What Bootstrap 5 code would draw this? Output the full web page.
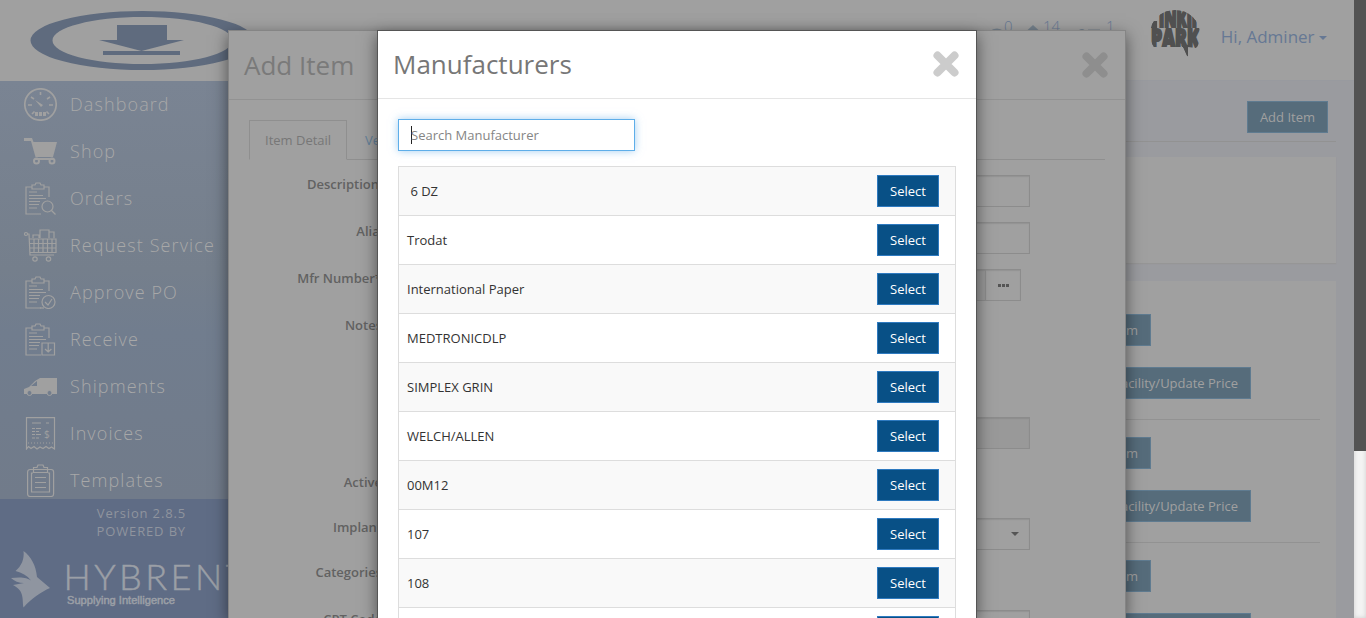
<!DOCTYPE html>
<html lang="en">
<head>
<meta charset="utf-8">
<title>Hybrent - Manufacturers</title>
<link href="https://cdn.jsdelivr.net/npm/bootstrap@5.3.0/dist/css/bootstrap.min.css" rel="stylesheet">
<style>
html,body{height:618px;overflow:hidden}
body{font-family:"Open Sans",sans-serif;font-size:13px;line-height:18px;background:#9a9b9f;color:#555}
.frame{height:618px;overflow:hidden}
.side{width:228px;height:618px;position:relative;z-index:1}
.brand{height:81px;background:#a0a0a0}
.menu{height:418px;background:linear-gradient(#7a8493,#757f8c 45%,#717d8e 60%,#717b8a)}
.menu a{height:47px;padding-left:24px;color:#a8a8a8;font-size:18px;letter-spacing:1.1px;font-weight:300;text-decoration:none;white-space:nowrap}
.menu a span{margin-top:-2px}
.menu svg{width:33px;height:33px;margin-right:13px;flex:none}
.ln{fill:none;stroke:#a0a0a0;stroke-width:1.2}
.foot{height:119px;background:#5f6c85;color:#8f949e;letter-spacing:.85px;padding:5px 42px 0 0}
.topbar{height:81px;background:#a0a0a0;border-bottom:1px solid #989a9f;padding-right:27px;color:#667894}
.hi{font-size:17px;margin:-7px 0 0 21px}
.caret{display:inline-block;border:4px solid transparent;border-top-color:currentColor;border-bottom:0}
.notif{margin-right:37px;margin-top:-1px}
.pagearea{width:1126px;height:618px;overflow:hidden}
.btn-x{--bs-btn-border-radius:0;--bs-btn-font-size:13px;--bs-btn-line-height:18px;--bs-btn-padding-y:6px;--bs-btn-padding-x:12px;height:32px;white-space:nowrap}
.btn-dim{--bs-btn-color:#a0a0a0;--bs-btn-bg:#566c7b;--bs-btn-border-color:#5f7b90;font-weight:500}
.btn-sel{--bs-btn-color:#fff;--bs-btn-bg:#085086;--bs-btn-border-color:#2e7ac0;width:62px;padding-left:0;padding-right:0;font-weight:500}
.content-in{padding:20px 18px 0 16px}
.rule{border-bottom:1px solid #929292}
.panel{background:#a0a0a0}
.panel-a{height:106px;margin:15px 0 18px;box-shadow:0 1px 1px #969696}
.panel-b{height:400px;padding:33px 16px}
.item{height:123px;padding-left:810px}
.item .rule{height:21px;margin-left:-810px}
.w-item{width:81px;text-align:right}.w-fac{width:181px;text-align:right;margin-top:21px}
.scrolltrack{width:12px;height:618px;background:#f3f3f3;box-shadow:inset 0 0 4px #ccc}
.scrollshade{height:451px;background:#535353}
.dlg{position:absolute;top:30px;height:588px;overflow:hidden;z-index:2;box-shadow:0 5px 15px rgba(0,0,0,.5)}
.dlg-item{left:228px;width:898px;background:#a0a0a0;border:1px solid #858585;border-bottom:0}
.dlg-mfr{left:377px;width:600px;background:#fff;border:1px solid #555;border-bottom:0;color:#333}
.dlg-head{height:68px;border-bottom:1px solid #e5e5e5;padding:0 16px 2px 15px;font-size:26px;color:#777}
.dlg-item .dlg-head{height:69px;border-color:#929292;color:#7a7a7a;padding-bottom:0}
.tabs{margin:20px 20px 0;height:40px;border-bottom:1px solid #8f8f8f}
.tabs span{height:40px;padding:11px 15px 0;color:#777;white-space:nowrap}
.tabs .on{border:1px solid #8f8f8f;border-bottom-color:#a0a0a0;width:98px;padding-top:10px}
.frow{height:47px}
.frow label{width:154px;text-align:right;font-weight:600;color:#626262;padding-right:1px}
.fld{width:632px;margin-left:15px;height:32px;border:1px solid #8c8c8c;box-shadow:inset 0 1px 1px rgba(0,0,0,.08)}
.off{background:#999}
.search{width:237px;height:32px;border:1px solid #5eaee9;border-radius:0;font-size:13px;padding:0 12px;color:#333;box-shadow:0 0 8px rgba(102,175,233,.6);margin:20px 0 15px 20px}
.cursor{width:1px;height:18px;background:#222;margin-right:-1px}
.search .ph{color:#858585}
.mlist{width:558px;margin-left:20px;border:1px solid #ddd;border-bottom:0}
.mlist>div{height:49px;border-bottom:1px solid #ddd;padding:0 16px 0 8px}
.mlist>div:nth-child(odd){background:#f9f9f9}
</style>
<script src="https://cdn.jsdelivr.net/npm/bootstrap@5.3.0/dist/js/bootstrap.bundle.min.js"></script>
</head>
<body>
<svg class="d-none">
 <symbol id="board" viewBox="0 0 33 33"><path class="ln" d="M25 15V5h-5M8 5H2v27h15M8 3h3l1-2h4l1 2h3v4H8zM5 10h8M5 13.500h14M5 16.500h17M5 19.500h11M5 22.500h10M5 26h8"/></symbol>
</svg>
<div class="d-flex frame">
 <aside class="side">
  <div class="brand"><svg width="260" height="81"><path fill="#5f6b7e" fill-rule="evenodd" d="M30.500 40.500a112 29.500 0 1 0 224 0a112 29.500 0 1 0-224 0M52.500 40.500c0-13 40-23.500 90-23.500s90 10.500 90 23.500-40 23.500-90 23.500-90-10.500-90-23.500M117 25h50v15h17l-42.500 11L99 40h18zM103 51h77v4h-77z"/></svg></div>
  <nav class="menu">
   <a class="d-flex align-items-center" href="#"><svg viewBox="0 0 33 33"><circle class="ln" cx="16.500" cy="16.500" r="15.700" style="stroke-width:1.700"/><path class="ln" d="M16.500 4v3M4 17h4M25 17h4M7 9l3 2M26 9l-3 2M8 26l2.500-2.500M25 26l-2.500-2.500" style="stroke-width:1.600"/><path fill="#a0a0a0" d="M11 12l8 5-2 2zM11 24h3v4h-3zM15 24h3v4h-3zM19 24h3v4h-3z"/></svg><span>Dashboard</span></a>
   <a class="d-flex align-items-center" href="#"><svg viewBox="0 0 33 33"><path fill="#a0a0a0" d="M0 3h8l1.500 4H33l-4 15H11.500L7 6H0z"/><path class="ln" d="M11 24h19" style="stroke-width:2"/><circle class="ln" cx="12.500" cy="26" r="2.500" style="stroke-width:2"/><circle class="ln" cx="28" cy="26" r="2.500" style="stroke-width:2"/></svg><span>Shop</span></a>
   <a class="d-flex align-items-center" href="#"><svg viewBox="0 0 33 33"><use href="#board"/><circle class="ln" cx="23.500" cy="24.500" r="5.500"/><path class="ln" d="M27.500 28.500l4 4"/></svg><span>Orders</span></a>
   <a class="d-flex align-items-center" href="#"><svg viewBox="0 0 33 33"><path class="ln" d="M3 5h2l1 21h24M5.500 10H32v13.500H6M6 14.500h26M6 19h26M10 10v13M14.500 10v13M19 10v13M23.500 10v13M28 10v13M9 9V6h6v3M16 9V1h9v8M25 3h5v6"/><circle class="ln" cx="2" cy="5" r="1.500"/><circle class="ln" cx="11" cy="30" r="2.200"/><circle class="ln" cx="24.500" cy="30" r="2.200"/></svg><span>Request Service</span></a>
   <a class="d-flex align-items-center" href="#"><svg viewBox="0 0 33 33"><use href="#board"/><path class="ln" d="M16 32h4"/><circle class="ln" cx="24.500" cy="26" r="6.500"/><path class="ln" d="M21 26l3 3 4-6"/></svg><span>Approve PO</span></a>
   <a class="d-flex align-items-center" href="#"><svg viewBox="0 0 33 33"><use href="#board"/><path class="ln" d="M18 20h12.500v12H18zM24.200 20v9M21 26l3.200 3 3.200-3"/></svg><span>Receive</span></a>
   <a class="d-flex align-items-center" href="#"><svg viewBox="0 0 33 33"><path fill="#a0a0a0" fill-rule="evenodd" d="M0 24v-5l5-2 6-6 5-3h17v16zM7 16h6v-5z"/><circle cx="5.500" cy="23" r="2.500" fill="#737e8e" stroke="#a0a0a0"/><circle cx="25.500" cy="23" r="2.500" fill="#737e8e" stroke="#a0a0a0"/></svg><span>Shipments</span></a>
   <a class="d-flex align-items-center" href="#"><svg viewBox="0 0 33 33"><path class="ln" d="M2.500 32V.7h28V32l-3-2-2.500 1.500-3-2-3 2-3-1.500-3 2-3-2.500-3 2-2.500-2zM8 6h9M22 6h3M8 11.500h3M12 11.500h5M8 14.500h3M12 14.500h3M8 17.500h3M12 17.500h5M8 21h3M12 21h3"/><path class="ln" stroke-dasharray="1 2" d="M4 26h26"/><text x="20" y="20.500" font-size="10" font-weight="400" letter-spacing="0" fill="#a0a0a0">$</text></svg><span>Invoices</span></a>
   <a class="d-flex align-items-center" href="#"><svg viewBox="0 0 33 33"><rect class="ln" x="3.600" y="5.500" width="26" height="27" rx="2.500"/><path class="ln" d="M9 9H7.500v19h18V9H24M9.500 8.500v-5H13l1-2.500h5l1 2.500h3.500v5zM11 13.500h11M11 18.500h11M11 23.500h11"/></svg><span>Templates</span></a>
  </nav>
  <div class="foot text-end"><div>Version 2.8.5</div><div>POWERED BY</div>
   <svg width="228" height="70" class="d-block"><path fill="#8f95a0" d="M23.500 11c7 5 12.500 14 13.500 26L50 48c-9 4-18 10-26.500 19.500C22 60 25 51 13 45l11-2c-5 0-10-2-13-5l8-.5c6 0 9 1 12 3-4-5-9-8-15.500-9.500 6-5 9-12 8-20z"/><text x="63.500" y="49.500" font-family="Lato" font-weight="300" font-size="36" textLength="183" letter-spacing="0" fill="#9b9fa6" stroke="#9b9fa6" stroke-width=".5">HYBRENT</text><text x="67" y="63.500" font-family="Liberation Sans" font-size="11" textLength="108" lengthAdjust="spacingAndGlyphs" letter-spacing="0" fill="#9b9fa6" stroke="#9b9fa6" stroke-width=".5">Supplying Intelligence</text></svg>
  </div>
 </aside>
 <main class="pagearea">
  <header class="topbar d-flex align-items-center justify-content-end">
   <svg class="notif" width="122" height="40"><path d="M-1 11q7-5 14 0zM36 10.500l6-5.500 6 5.500zM88 9h4l3 2h-3zM97 9.500h12v2H97z" fill="#74808c"/><g fill="#667894" font-size="15" font-weight="300"><text x="13" y="12">0</text><text x="52" y="12">14</text><text x="115" y="12">1</text></g></svg>
   <svg width="50" height="50" viewBox="0 0 50 50" style="margin-top:-10px"><defs><clipPath id="disc"><path d="M0 24a25 24 0 0 1 50 0q0 10-4 14l-8-1v11l-5-11H4Q0 32 0 24"/></clipPath></defs><g clip-path="url(#disc)" font-family="Open Sans" font-weight="800" fill="#505050" stroke="#505050" stroke-width="2.200"><text x="9" y="17" font-size="22" textLength="38" lengthAdjust="spacingAndGlyphs">INKII</text><text x="1" y="37" font-size="25" textLength="48" lengthAdjust="spacingAndGlyphs">PARK</text><path d="M33 36h4v10zM2 12h4v5H2z"/></g></svg>
   <span class="hi">Hi, Adminer <i class="caret" style="vertical-align:3px"></i></span>
  </header>
  <div class="content-in">
   <div class="rule d-flex justify-content-end align-items-start pe-2" style="height:41px"><button class="btn btn-x btn-dim">Add Item</button></div>
   <div class="panel panel-a"></div>
   <div class="panel panel-b">
    <div class="item"><button class="btn btn-x btn-dim w-item d-block">Edit Item</button><button class="btn btn-x btn-dim w-fac d-block">Add Facility/Update Price</button><div class="rule"></div></div>
    <div class="item"><button class="btn btn-x btn-dim w-item d-block">Edit Item</button><button class="btn btn-x btn-dim w-fac d-block">Add Facility/Update Price</button><div class="rule"></div></div>
    <div class="item"><button class="btn btn-x btn-dim w-item d-block">Edit Item</button><button class="btn btn-x btn-dim w-fac d-block">Add Facility/Update Price</button></div>
   </div>
  </div>
 </main>
 <div class="scrolltrack"><div class="scrollshade"></div></div>
</div>

<section class="dlg dlg-item">
 <div class="dlg-head d-flex align-items-center justify-content-between">Add Item<svg width="28" height="28" viewBox="0 0 28 28"><path stroke="#8e8e8e" stroke-width="8" stroke-linecap="round" d="M5.500 5.500l17 17M22.500 5.500l-17 17"/></svg></div>
 <div class="tabs d-flex"><span class="on">Item Detail</span><span style="color:#64809a;padding-left:18px">Vendors</span></div>
 <div style="padding-top:15px">
  <div class="frow d-flex"><label class="pe-1">Description</label><div class="fld"></div></div>
  <div class="frow d-flex"><label style="padding:0 0 0 6px;width:157px">Alias</label><div class="fld ms-2" style="width:636px"></div></div>
  <div class="frow d-flex"><label>Mfr Number*</label><div class="fld off" style="width:588px"></div><div class="fld d-flex align-items-center justify-content-center" style="width:36px;margin-left:-1px"><svg width="11" height="3"><path fill="#555" d="M0 0h3v3H0zM4 0h3v3H4zM8 0h3v3H8z"/></svg></div></div>
  <div class="frow d-flex" style="height:101px"><label>Notes</label></div>
  <div class="frow d-flex" style="height:56px"><label></label><div class="fld off"></div></div>
  <div class="frow d-flex" style="height:45px"><label>Active</label></div>
  <div class="frow d-flex" style="height:45px"><label>Implant</label><div class="fld d-flex align-items-center justify-content-end pe-2"><i class="caret" style="margin-right:2px"></i></div></div>
  <div class="frow d-flex" style="height:47px"><label>Categories</label></div>
  <div class="frow d-flex"><label>CPT Code</label><div class="fld"></div></div>
 </div>
</section>

<section class="dlg dlg-mfr">
 <div class="dlg-head d-flex align-items-center justify-content-between">Manufacturers<svg width="28" height="28" viewBox="0 0 28 28"><path stroke="#ccc" stroke-width="8" stroke-linecap="round" d="M5.500 5.500l17 17M22.500 5.500l-17 17"/></svg></div>
 <div class="search d-flex align-items-center"><i class="cursor"></i><span class="ph">Search Manufacturer</span></div>
 <div class="mlist">
  <div class="d-flex align-items-center justify-content-between"><span>&nbsp;6 DZ</span><button class="btn btn-x btn-sel">Select</button></div>
  <div class="d-flex align-items-center justify-content-between"><span>Trodat</span><button class="btn btn-x btn-sel">Select</button></div>
  <div class="d-flex align-items-center justify-content-between"><span>International Paper</span><button class="btn btn-x btn-sel">Select</button></div>
  <div class="d-flex align-items-center justify-content-between"><span>MEDTRONICDLP</span><button class="btn btn-x btn-sel">Select</button></div>
  <div class="d-flex align-items-center justify-content-between"><span>SIMPLEX GRIN</span><button class="btn btn-x btn-sel">Select</button></div>
  <div class="d-flex align-items-center justify-content-between"><span>WELCH/ALLEN</span><button class="btn btn-x btn-sel">Select</button></div>
  <div class="d-flex align-items-center justify-content-between"><span>00M12</span><button class="btn btn-x btn-sel">Select</button></div>
  <div class="d-flex align-items-center justify-content-between"><span>107</span><button class="btn btn-x btn-sel">Select</button></div>
  <div class="d-flex align-items-center justify-content-between"><span>108</span><button class="btn btn-x btn-sel">Select</button></div>
  <div class="d-flex align-items-center justify-content-between"><span></span><button class="btn btn-x btn-sel">Select</button></div>
 </div>
</section>
</body>
</html>
